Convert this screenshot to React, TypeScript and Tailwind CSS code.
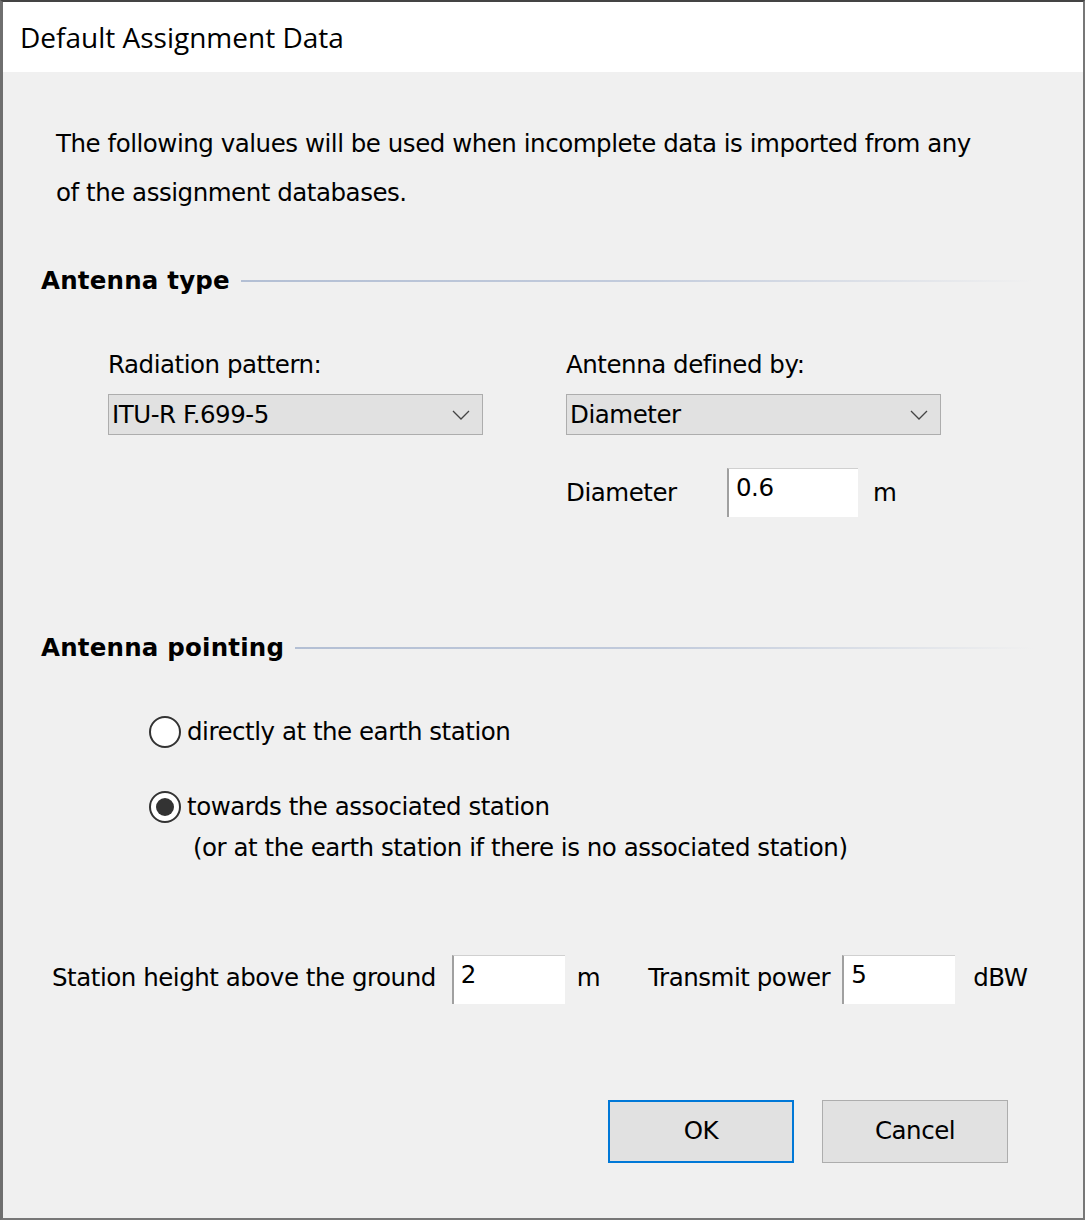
import React from 'react';

const font = { fontFamily: '"DejaVu Sans", Verdana, sans-serif' };

const Chevron = () => (
  <svg width="18" height="10" viewBox="0 0 18 10" fill="none">
    <path d="M1 1 L9 9 L17 1" stroke="#444" strokeWidth="1.3" />
  </svg>
);

const Select = ({ value }: { value: string }) => (
  <div className="flex h-[41px] w-[375px] items-center justify-between border border-[#adadad] bg-[#e1e1e1] pl-[3px] pr-[12px]">
    <span className="pt-[2px]">{value}</span>
    <Chevron />
  </div>
);

const Field = ({ value, width }: { value: string; width: string }) => (
  <div className={`h-[49px] ${width} border-l-2 border-t border-l-[#a0a0a0] border-t-[#d0d0d0] bg-white pl-[7px] pt-[1px] leading-[36px]`}>
    {value}
  </div>
);

const Heading = ({ children }: { children: React.ReactNode }) => (
  <div className="flex h-[40px] items-center pl-[38px] pr-[50px]">
    <span className="font-bold tracking-[0.2px]">{children}</span>
    <div className="ml-[11px] h-[2px] flex-1 bg-gradient-to-r from-[#b3bfd4] via-[#c2cbdc] to-[#f0f0f0]" />
  </div>
);

const Radio = ({ checked }: { checked?: boolean }) => (
  <div className="flex h-[32px] w-[32px] items-center justify-center rounded-full border-2 border-[#333] bg-white">
    {checked && <div className="h-[18px] w-[18px] rounded-full bg-[#333]" />}
  </div>
);

export default function App() {
  return (
    <div
      style={font}
      className="flex h-[1220px] w-[1085px] flex-col border-b-2 border-l-[3px] border-r-2 border-t-2 border-b-[#777] border-l-[#6f6f6f] border-r-[#777] border-t-[#444] bg-[#f0f0f0] text-[24.5px] tracking-[-0.47px] text-black"
    >
      <div
        className="flex h-[70px] items-center bg-white pl-[17px] text-[28px] tracking-normal"
        style={{ fontFamily: '"Open Sans", "Noto Sans", sans-serif' }}
      >
        Default Assignment Data
      </div>

      <div className="mt-[47px] pl-[53px] leading-[49px]">
        <p>The following values will be used when incomplete data is imported from any</p>
        <p>of the assignment databases.</p>
      </div>

      <div className="mt-[44px]">
        <Heading>Antenna type</Heading>
      </div>

      <div className="mt-[44px] flex pl-[105px]">
        <div className="w-[458px]">
          <div className="flex h-[40px] items-center">Radiation pattern:</div>
          <div className="mt-[9px]">
            <Select value="ITU-R F.699-5" />
          </div>
        </div>
        <div>
          <div className="flex h-[40px] items-center">Antenna defined by:</div>
          <div className="mt-[9px]">
            <Select value="Diameter" />
          </div>
          <div className="mt-[33px] flex items-center">
            <span className="w-[161px] pt-[2px]">Diameter</span>
            <Field value="0.6" width="w-[131px]" />
            <span className="ml-[15px] pt-[2px]">m</span>
          </div>
        </div>
      </div>

      <div className="mt-[111px]">
        <Heading>Antenna pointing</Heading>
      </div>

      <div className="mt-[44px] flex h-[40px] items-center gap-[6px] pl-[146px]">
        <Radio />
        <span>directly at the earth station</span>
      </div>

      <div className="mt-[35px] flex h-[40px] items-center gap-[6px] pl-[146px]">
        <Radio checked />
        <span>towards the associated station</span>
      </div>
      <div className="mt-[1px] flex h-[40px] items-center pl-[190px]">
        (or at the earth station if there is no associated station)
      </div>

      <div className="mt-[87px] flex items-center pl-[49px]">
        <span className="-mt-[3px]">Station height above the ground</span>
        <div className="ml-[16px]">
          <Field value="2" width="w-[113px]" />
        </div>
        <span className="-mt-[3px] ml-[12px]">m</span>
        <span className="-mt-[3px] ml-[48px]">Transmit power</span>
        <div className="ml-[12px]">
          <Field value="5" width="w-[113px]" />
        </div>
        <span className="-mt-[3px] ml-[18px]">dBW</span>
      </div>

      <div className="mt-[96px] flex gap-[28px] pl-[605px]">
        <button className="h-[63px] w-[186px] border-2 border-[#0078d7] bg-[#e1e1e1]">OK</button>
        <button className="h-[63px] w-[186px] border border-[#adadad] bg-[#e1e1e1]">Cancel</button>
      </div>
    </div>
  );
}
